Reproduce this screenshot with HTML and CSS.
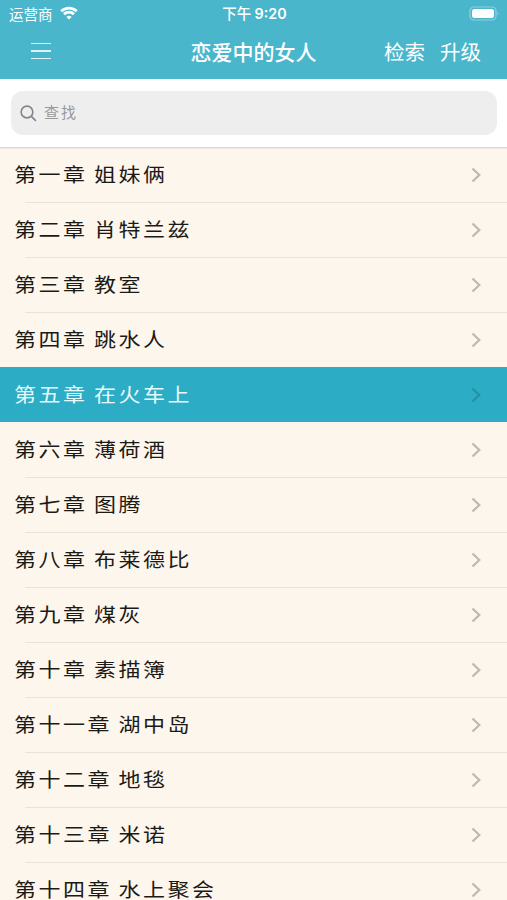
FILE: index.html
```
<!DOCTYPE html>
<html lang="zh-CN">
<head>
    <meta charset="UTF-8">
    <meta name="viewport" content="width=device-width, initial-scale=1.0">
    <title>恋爱中的女人</title>
    <link rel="stylesheet" href="styles.css">
</head>
<body>
    <!-- Header -->
    <header class="header">
        <div class="status-bar">
            <div class="carrier">
                <span>运营商</span>
                <svg class="wifi-icon" viewBox="0 0 18 14">
                    <path d="M1.2 5.2a11.2 11.2 0 0 1 15.6 0" />
                    <path d="M4 8.2a7.2 7.2 0 0 1 10 0" />
                    <path class="wifi-dot" d="M9 13.6L6.4 10.9a3.8 3.8 0 0 1 5.2 0z" />
                </svg>
            </div>
            <div class="time">下午 <span class="digits">9:20</span></div>
            <div class="battery-box">
                <svg class="battery-icon" viewBox="0 0 31 15">
                    <rect class="battery-shell" x="1" y="1" width="26" height="13" rx="4" />
                    <rect class="battery-level" x="3" y="3" width="22" height="9" rx="2.5" />
                    <path class="battery-tip" d="M28.5 5.5q2 2 0 4z" />
                </svg>
            </div>
        </div>
        <nav class="navbar">
            <button class="menu-btn" aria-label="菜单">
                <span></span>
                <span></span>
                <span></span>
            </button>
            <h1 class="title">恋爱中的女人</h1>
            <div class="nav-links">
                <a href="#">检索</a>
                <a href="#">升级</a>
            </div>
        </nav>
    </header>

    <!-- Search -->
    <div class="search">
        <label class="search-box">
            <svg class="search-icon" viewBox="0 0 18 18">
                <circle cx="7.4" cy="7.4" r="6.2" />
                <path d="M12 12l4.8 4.8" />
            </svg>
            <input class="search-input" type="text" placeholder="查找">
        </label>
    </div>

    <!-- Chapter List -->
    <ul class="chapters">
        <li class="chapter"><span class="name">第一章 姐妹俩</span><svg class="arrow" viewBox="0 0 10 16"><path d="M1.5 1.5L8.3 8l-6.8 6.5" /></svg></li>
        <li class="chapter"><span class="name">第二章 肖特兰兹</span><svg class="arrow" viewBox="0 0 10 16"><path d="M1.5 1.5L8.3 8l-6.8 6.5" /></svg></li>
        <li class="chapter"><span class="name">第三章 教室</span><svg class="arrow" viewBox="0 0 10 16"><path d="M1.5 1.5L8.3 8l-6.8 6.5" /></svg></li>
        <li class="chapter"><span class="name">第四章 跳水人</span><svg class="arrow" viewBox="0 0 10 16"><path d="M1.5 1.5L8.3 8l-6.8 6.5" /></svg></li>
        <li class="chapter active"><span class="name">第五章 在火车上</span><svg class="arrow" viewBox="0 0 10 16"><path d="M1.5 1.5L8.3 8l-6.8 6.5" /></svg></li>
        <li class="chapter"><span class="name">第六章 薄荷酒</span><svg class="arrow" viewBox="0 0 10 16"><path d="M1.5 1.5L8.3 8l-6.8 6.5" /></svg></li>
        <li class="chapter"><span class="name">第七章 图腾</span><svg class="arrow" viewBox="0 0 10 16"><path d="M1.5 1.5L8.3 8l-6.8 6.5" /></svg></li>
        <li class="chapter"><span class="name">第八章 布莱德比</span><svg class="arrow" viewBox="0 0 10 16"><path d="M1.5 1.5L8.3 8l-6.8 6.5" /></svg></li>
        <li class="chapter"><span class="name">第九章 煤灰</span><svg class="arrow" viewBox="0 0 10 16"><path d="M1.5 1.5L8.3 8l-6.8 6.5" /></svg></li>
        <li class="chapter"><span class="name">第十章 素描簿</span><svg class="arrow" viewBox="0 0 10 16"><path d="M1.5 1.5L8.3 8l-6.8 6.5" /></svg></li>
        <li class="chapter"><span class="name">第十一章 湖中岛</span><svg class="arrow" viewBox="0 0 10 16"><path d="M1.5 1.5L8.3 8l-6.8 6.5" /></svg></li>
        <li class="chapter"><span class="name">第十二章 地毯</span><svg class="arrow" viewBox="0 0 10 16"><path d="M1.5 1.5L8.3 8l-6.8 6.5" /></svg></li>
        <li class="chapter"><span class="name">第十三章 米诺</span><svg class="arrow" viewBox="0 0 10 16"><path d="M1.5 1.5L8.3 8l-6.8 6.5" /></svg></li>
        <li class="chapter"><span class="name">第十四章 水上聚会</span><svg class="arrow" viewBox="0 0 10 16"><path d="M1.5 1.5L8.3 8l-6.8 6.5" /></svg></li>
    </ul>
</body>
</html>
```

FILE: styles.css
```
* {
    margin: 0;
    padding: 0;
    box-sizing: border-box;
}

body {
    height: 100vh;
    display: flex;
    flex-direction: column;
    overflow: hidden;
    background-color: #fff;
    font-family: "Noto Sans CJK SC", sans-serif;
}

/* Header */
.header {
    height: 79px;
    flex-shrink: 0;
    background-color: #4ab6cc;
    color: #fff;
}

.status-bar {
    height: 26px;
    display: grid;
    grid-template-columns: 1fr auto 1fr;
    align-items: center;
    padding: 0 7px 0 9px;
    font-size: 14.5px;
    line-height: 25px;
}

.carrier {
    display: flex;
    align-items: center;
    gap: 7px;
}

.wifi-icon {
    width: 18px;
    height: 14px;
    fill: none;
    stroke: #fff;
    stroke-width: 2.8;
}

.wifi-icon .wifi-dot {
    fill: #fff;
    stroke: none;
}

.time {
    font-weight: 500;
}

.digits {
    font-family: Inter, sans-serif;
    font-weight: 600;
    font-size: 14.3px;
}

.battery-box {
    display: flex;
    justify-content: flex-end;
}

.battery-icon {
    width: 31px;
    height: 15px;
}

.battery-shell {
    fill: none;
    stroke: #8fd0de;
    stroke-width: 1.2;
}

.battery-level {
    fill: #fff;
}

.battery-tip {
    fill: #8fd0de;
}

.navbar {
    height: 50px;
    display: grid;
    grid-template-columns: 1fr auto 1fr;
    align-items: center;
    padding: 0 26px 0 31px;
}

.menu-btn {
    width: 20px;
    display: flex;
    flex-direction: column;
    gap: 6px;
    border: none;
    background: none;
}

.menu-btn span {
    height: 1.5px;
    background-color: #dcf2f6;
}

.title {
    margin-right: 5px;
    font-size: 21px;
    font-weight: 500;
    line-height: 50px;
}

.nav-links {
    display: flex;
    justify-content: flex-end;
    gap: 15px;
}

.nav-links a {
    color: #fff;
    font-size: 20.5px;
    line-height: 50px;
    text-decoration: none;
}

/* Search */
.search {
    height: 71px;
    flex-shrink: 0;
    padding: 15px 10px 12px 11px;
    margin-top: -3px;
    background-clip: content-box;
}

.search-box {
    height: 44px;
    display: flex;
    align-items: center;
    gap: 7px;
    padding: 0 9px;
    border-radius: 12px;
    background-color: #eee;
}

.search-icon {
    width: 17px;
    height: 17px;
    fill: none;
    stroke: #858585;
    stroke-width: 1.7;
}

.search-input {
    flex: 1;
    height: 40px;
    padding-bottom: 3px;
    border: none;
    outline: none;
    background: none;
    font-family: inherit;
    font-size: 15px;
    letter-spacing: 2px;
}

.search-input::placeholder {
    color: #999;
}

/* Chapter List */
.chapters {
    flex-shrink: 0;
    list-style: none;
    background-color: #fcf6ec;
    background-image: linear-gradient(#dcdad6, #dcdad6);
    background-size: 100% 1.5px;
    background-repeat: no-repeat;
}

.chapter {
    height: 55px;
    display: flex;
    align-items: center;
    justify-content: space-between;
    padding: 0 26px 0 14px;
    color: #1c1a17;
}

/* wide, flat lettering */
.name {
    padding-bottom: 3px;
    font-size: 22px;
    line-height: 28px;
    letter-spacing: 2.5px;
    word-spacing: -1px;
    transform: scaleY(0.88);
}

/* inset separator */
.chapter + .chapter {
    background: linear-gradient(#e6e4da, #e6e4da) 25px 0 / 100% 1px no-repeat;
}

.chapter.active,
.chapter.active + .chapter {
    background: none;
}

.chapter.active {
    background-color: #2cacc5;
    color: #e6fafc;
}

.arrow {
    width: 10px;
    height: 16px;
    fill: none;
    stroke: #bdb9b1;
    stroke-width: 2.2;
}

.active .arrow {
    stroke: #248fa5;
}
```
